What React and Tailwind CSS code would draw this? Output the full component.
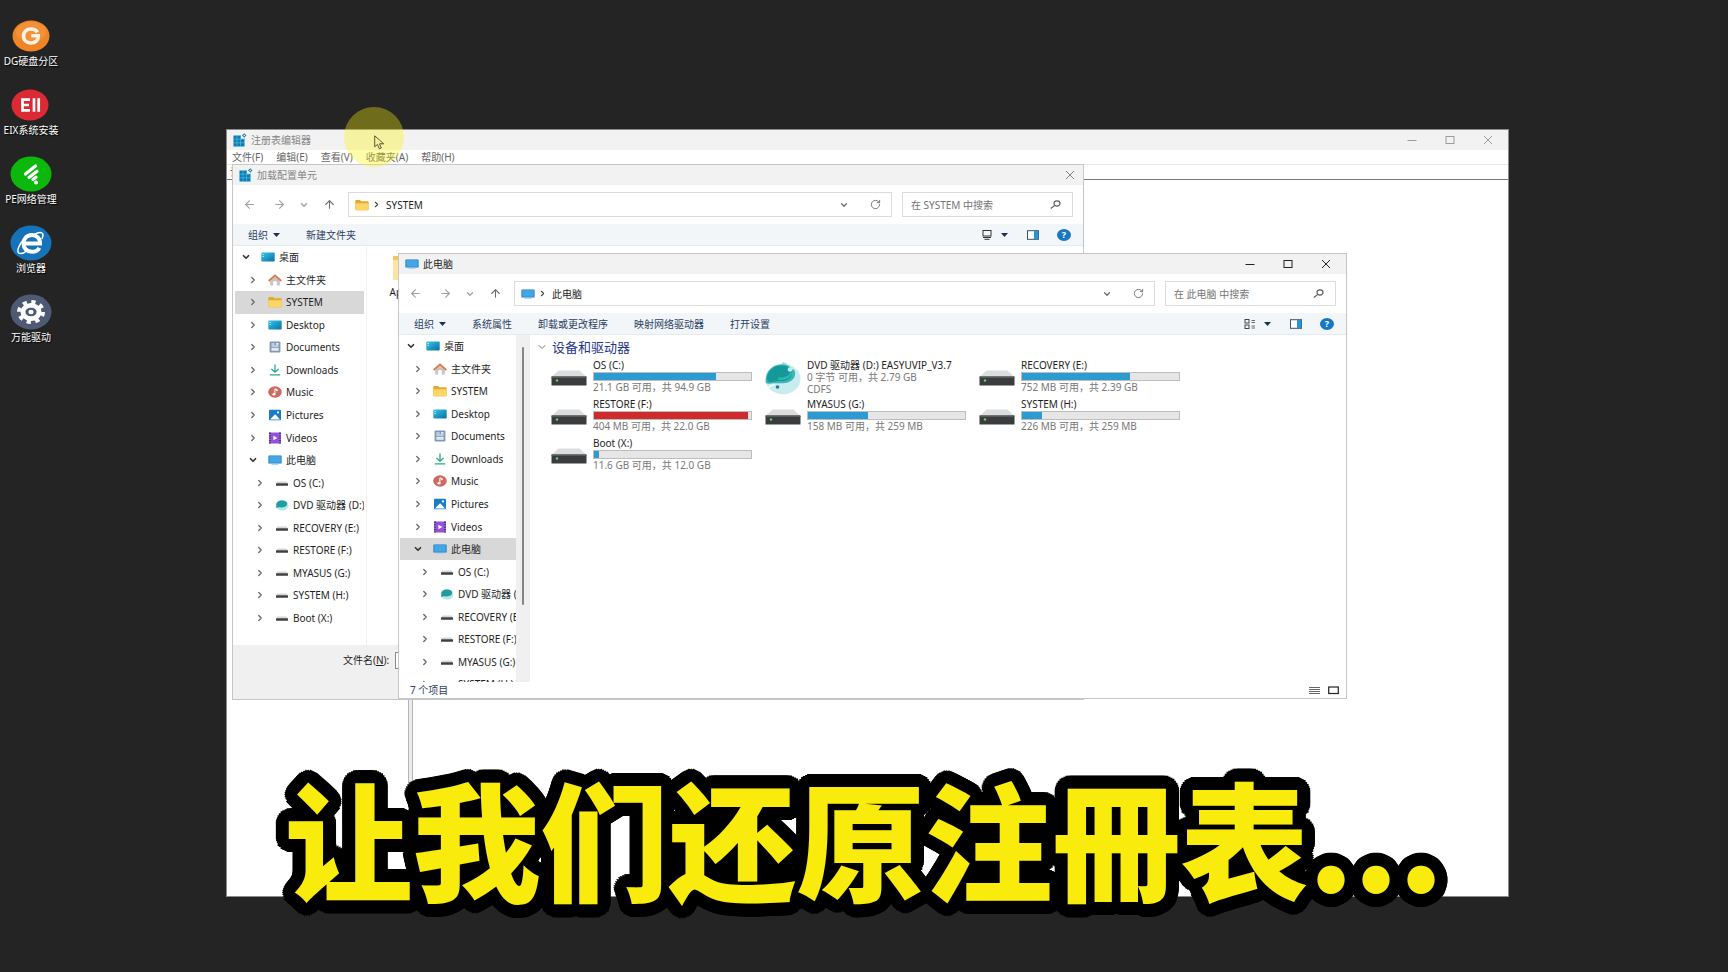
import { useState } from "react";
import { ArrowLeft, ArrowRight, ArrowUp, ChevronDown, ChevronRight, RotateCw } from "lucide-react";
import clsx from "clsx";

const TREE = [
  { label: "桌面", icon: "desktop", level: 0, open: true },
  { label: "主文件夹", icon: "home", level: 1 },
  { label: "SYSTEM", icon: "folder", level: 1 },
  { label: "Desktop", icon: "desktop", level: 1 },
  { label: "Documents", icon: "documents", level: 1 },
  { label: "Downloads", icon: "downloads", level: 1 },
  { label: "Music", icon: "music", level: 1 },
  { label: "Pictures", icon: "pictures", level: 1 },
  { label: "Videos", icon: "videos", level: 1 },
  { label: "此电脑", icon: "pc", level: 1, open: true },
  { label: "OS (C:)", icon: "drive", level: 2 },
  { label: "DVD 驱动器 (D:) EASYUVIP_V3.7", icon: "dvd", level: 2 },
  { label: "RECOVERY (E:)", icon: "drive", level: 2 },
  { label: "RESTORE (F:)", icon: "drive", level: 2 },
  { label: "MYASUS (G:)", icon: "drive", level: 2 },
  { label: "SYSTEM (H:)", icon: "drive", level: 2 },
  { label: "Boot (X:)", icon: "drive", level: 2 },
];

const DRIVES = [
  { name: "OS (C:)", info: "21.1 GB 可用，共 94.9 GB", used: 78 },
  { name: "DVD 驱动器 (D:) EASYUVIP_V3.7", info: "0 字节 可用，共 2.79 GB", fs: "CDFS" },
  { name: "RECOVERY (E:)", info: "752 MB 可用，共 2.39 GB", used: 69 },
  { name: "RESTORE (F:)", info: "404 MB 可用，共 22.0 GB", used: 98 },
  { name: "MYASUS (G:)", info: "158 MB 可用，共 259 MB", used: 38 },
  { name: "SYSTEM (H:)", info: "226 MB 可用，共 259 MB", used: 13 },
  { name: "Boot (X:)", info: "11.6 GB 可用，共 12.0 GB", used: 3 },
];

const INDENT = ["pl-[5px]", "pl-[12px]", "pl-[19px]"];

// Two rings of hard shadows make a thick outline with round corners
const OUTLINE = [7, 13]
  .flatMap((radius) =>
    Array.from({ length: 36 }, (_, i) => {
      const angle = (i * Math.PI) / 18;
      return `${(radius * Math.cos(angle)).toFixed(1)}px ${(radius * Math.sin(angle)).toFixed(1)}px 0 #000`;
    })
  )
  .join(", ");

function SmallIcon({ name }) {
  return (
    <svg viewBox="0 0 14 12" className="w-3.5 h-3 shrink-0" aria-hidden="true">
      {name === "desktop" && (
        <>
          <defs>
            <linearGradient id="desk" x1="0" y1="0" x2="1" y2="1">
              <stop offset="0" stopColor="#35c6ea" />
              <stop offset="1" stopColor="#0b6ea3" />
            </linearGradient>
          </defs>
          <rect x="0.3" y="1.6" width="13.4" height="9" rx="1" fill="url(#desk)" />
          <path d="M1.6 3.5h1.2M1.6 5.5h1.2" stroke="#d8f5ff" strokeWidth="0.9" />
        </>
      )}
      {name === "home" && (
        <>
          <path d="M2.2 6 7 2l4.8 4v5.4H8.6V7.6H5.4v3.8H2.2z" fill="#c9c5c3" />
          <path d="M5.4 7.6h3.2v3.8H5.4z" fill="#fff" />
          <path d="M0.7 7 7 1.4 13.3 7" fill="none" stroke="#d97b4a" strokeWidth="1.8" />
        </>
      )}
      {name === "folder" && (
        <>
          <path d="M0.3 2q0-1 1-1h3.6l1.4 1.2h6.4q1 0 1 1V10.5q0 .7-.8.7H1.1q-.8 0-.8-.7z" fill="#e3a92d" />
          <path d="M0.3 4.2h13.4v6.2q0 .8-.8.8H1.1q-.8 0-.8-.8z" fill="#fbd667" />
        </>
      )}
      {name === "documents" && (
        <>
          <rect x="1.6" y="0.6" width="10.8" height="11" rx="1" fill="#8299b5" />
          <path d="M3.4 3h3.2M3.4 5h7.2" stroke="#fff" strokeWidth="1.1" />
          <rect x="3.4" y="6.8" width="7.2" height="3" fill="#dfe9f4" />
          <rect x="8" y="2" width="2.6" height="1.8" fill="#dfe9f4" />
        </>
      )}
      {name === "downloads" && (
        <path d="M7 0.6v7.4M3.4 5 7 8.200 10.600 5M1.8 10.9h10.4" fill="none" stroke="#2aa986" strokeWidth="1.3" />
      )}
      {name === "music" && (
        <>
          <ellipse cx="7" cy="6" rx="6.8" ry="5.8" fill="#cf6a63" />
          <path d="M6.9 8.2V2.8l2.4.8v1.2l-1.5-.4" fill="none" stroke="#fff" strokeWidth="1" />
          <ellipse cx="5.9" cy="8.2" rx="1.5" ry="1.3" fill="#fff" />
        </>
      )}
      {name === "pictures" && (
        <>
          <rect x="1" y="0.8" width="12" height="10.4" rx="1" fill="#1a7cc8" />
          <path d="M2 10.6 6.800 5.600q.3-.3.7 0L12 10.6z" fill="#fff" />
          <circle cx="10" cy="3.4" r="1.1" fill="#fff" />
        </>
      )}
      {name === "videos" && (
        <>
          <rect x="1" y="0.6" width="12" height="11" rx="1" fill="#9351d6" />
          <path d="M1 0.6h2v11H1zM11 0.6h2v11h-2z" fill="#5b2aa0" />
          <path d="M2 2v8.5M12 2v8.5" stroke="#d9c2f5" strokeWidth="0.9" strokeDasharray="1.2 1.2" />
          <path d="M5.4 3.7 9.400 6l-4 2.3z" fill="#fff" />
        </>
      )}
      {name === "pc" && (
        <>
          <rect x="0.4" y="1.4" width="13.2" height="8.2" rx="0.6" fill="#1879b8" />
          <rect x="1.2" y="2.1" width="11.6" height="6.7" fill="#43a6e6" />
          <path d="M3.5 10.6h7" stroke="#a9d4ee" strokeWidth="1" />
        </>
      )}
      {name === "drive" && (
        <>
          <path d="M2.5 4.5h9l1.5 2H1z" fill="#d5d6d8" />
          <rect x="1" y="6.3" width="12" height="2.5" rx="0.4" fill="#3f4042" />
        </>
      )}
      {name === "dvd" && (
        <>
          <ellipse cx="7.2" cy="6.4" rx="6.2" ry="5.2" fill="#b5e6ea" />
          <path d="M1.2 6.8C1 3.500 3.500 1.600 7 1.600c4 0 6 2.200 4.800 4.600-1.200 2-4 2.300-6 2.200-2-.2-3.600.2-4 1q-.6-1-.6-2.600z" fill="#1f9da0" />
        </>
      )}
    </svg>
  );
}

function RegistryIcon() {
  return (
    <svg viewBox="0 0 14 14" className="w-3.5 h-3.5 shrink-0" aria-hidden="true">
      <rect x="0.5" y="2.5" width="11" height="11" fill="#0a7db5" />
      <path d="M4 2.500v11M7.500 2.500v11M.5 6.200h11M.5 9.800h11" stroke="#63c3e8" strokeWidth="0.6" />
      <rect x="8" y="2" width="3.6" height="3.800" fill="#f2f2f2" />
      <path d="m11.200 .2 2.300 2.200-2.300 2.200-2.300-2.200z" fill="#2b7fa6" />
      <circle cx="11.2" cy="2.4" r="0.7" fill="#fff" />
    </svg>
  );
}

function DriveIcon() {
  return (
    <svg viewBox="0 0 36 16" className="w-9 h-4" aria-hidden="true">
      <path d="M7.5 0.5h21L35.500 7H.5z" fill="#dcdddf" />
      <rect x="0.5" y="6.5" width="35" height="9" rx="0.6" fill="#3b3c3e" />
      <rect x="0.5" y="6.5" width="35" height="1.5" fill="#58595b" />
      <circle cx="6" cy="10.5" r="1.2" fill="#63d26a" />
    </svg>
  );
}

function DiscIcon() {
  return (
    <svg viewBox="0 0 36 34" className="w-9 h-[34px]" aria-hidden="true">
      <path d="M14 2.5q1.5 1.5 3 .5.3-2 1.3-2 .8 1.5 3.2.9-.4 2-2.5 2.6z" fill="#8fd0d3" />
      <ellipse cx="18" cy="18" rx="17.5" ry="15.2" fill="#c9ecef" />
      <path d="M.8 22C-.5 11 7 3.500 17 3.200c5 0 8 1.800 9.500 4.500l3 1.600c2 5-.5 9.500-5.500 11.700-4.500 2-9.500 1.200-13.500 1.200-4.500 0-7.500 1.200-9.700-.2z" fill="#3fb5b3" />
      <path d="M2 17C3 9 9 4.500 17 4.500c6 0 11 4 10 9-1 5-7 7-12 6.500-5-.5-8 1.500-10.500 1.200Q2 20.500 2 17z" fill="#14989a" />
      <path d="M13 17.500c6 1 12-1 13.500-6" fill="none" stroke="#2cb6b2" strokeWidth="2.500" />
      <circle cx="25" cy="8.500" r="2.3" fill="#bfeef0" />
      <circle cx="12.5" cy="26" r="1.8" fill="#23808d" />
      <path d="M3 27q3.500-4 7-3" fill="none" stroke="#fff" strokeWidth="1.2" />
    </svg>
  );
}

function Caret() {
  return (
    <svg viewBox="0 0 7 4" className="w-[7px] h-1" aria-hidden="true">
      <path d="M0 0h7L3.500 4z" fill="#1d2f55" />
    </svg>
  );
}

function CloseGlyph() {
  return (
    <svg viewBox="0 0 10 10" className="size-2.5">
      <path d="m1 1 8 8M9 1 1 9" stroke="currentColor" fill="none" />
    </svg>
  );
}

function CaptionButtons({ muted }) {
  return (
    <div className={clsx("flex self-stretch pr-px", muted ? "text-[#9b9b9b]" : "text-[#222222]")}>
      <button aria-label="最小化" className="w-[38px] grid place-items-center">
        <svg viewBox="0 0 10 10" className="size-2.5"><path d="M.5 5.500h9" stroke="currentColor" /></svg>
      </button>
      <button aria-label="最大化" className="w-[38px] grid place-items-center">
        <svg viewBox="0 0 10 10" className="size-2.5"><rect x="1" y="1.5" width="8" height="7" fill="none" stroke="currentColor" /></svg>
      </button>
      <button aria-label="关闭" className="w-[38px] grid place-items-center">
        <CloseGlyph />
      </button>
    </div>
  );
}

function NavRow({ icon, place, hint }) {
  const [query, setQuery] = useState("");

  return (
    <div className="flex items-center pl-px pr-2.5 h-[39px] text-[#6d6d6d]">
      <button aria-label="后退" className="w-[30px] grid place-items-center text-[#a0a0a0]"><ArrowLeft size={13} strokeWidth={2} /></button>
      <button aria-label="前进" className="w-[30px] grid place-items-center text-[#a0a0a0]"><ArrowRight size={13} strokeWidth={2} /></button>
      <button aria-label="最近位置" className="w-5 grid place-items-center text-[#a0a0a0]"><ChevronDown size={10} strokeWidth={3} /></button>
      <button aria-label="向上" className="w-[30px] grid place-items-center"><ArrowUp size={13} strokeWidth={2} /></button>

      {/* Address bar */}
      <div className="ml-1 flex-1 h-[25px] flex items-center border border-[#dcdcdc] pl-1.5 pr-2.5">
        <SmallIcon name={icon} />
        <ChevronRight size={9} strokeWidth={3} className="ml-[3px] text-[#444444]" />
        <button className="ml-[5px] text-[#1e1e1e]">{place}</button>
        <button aria-label="历史记录" className="ml-auto"><ChevronDown size={10} strokeWidth={3} /></button>
        <button aria-label="刷新" className="ml-[21px]"><RotateCw size={11} /></button>
      </div>

      <div className="ml-2.5 w-[171px] h-[25px] flex items-center border border-[#dcdcdc] pl-2 pr-[11px]">
        <input
          type="text"
          aria-label={hint}
          placeholder={hint}
          value={query}
          onChange={(e) => setQuery(e.target.value)}
          className="min-w-0 flex-1 outline-none placeholder:text-[#747474]"
        />
        <button aria-label="搜索">
          <svg viewBox="0 0 11 9" className="w-[11px] h-[9px]" fill="none" stroke="#5c5c5c" strokeWidth="1.2">
            <ellipse cx="7" cy="3.500" rx="3" ry="2.700" />
            <path d="M4.800 5.400.8 8.500" />
          </svg>
        </button>
      </div>
    </div>
  );
}

function Toolbar({ items, view }) {
  return (
    <div className="flex items-center h-[22px] bg-[#f3f6f9] border-b border-[#e8ebee] pl-[15px] pr-3 text-[#2a3f63]">
      <div className="flex items-center gap-[26px]">
        <button className="flex items-center gap-[5px]">组织 <Caret /></button>
        {items.map((item) => <button key={item}>{item}</button>)}
      </div>
      <div className="ml-auto flex items-center">
        <button aria-label="更改视图" className="flex items-center gap-2">
          {view === "tiles" ? (
            <svg viewBox="0 0 12 10" className="w-3 h-2.5" fill="none" stroke="#444444">
              <rect x="1" y="0.5" width="4" height="3.5" />
              <rect x="1" y="6" width="4" height="3.5" />
              <path d="M7.500 1.500H11M7.500 3.500H11M7.500 7H11M7.500 9H11" strokeWidth="0.8" />
            </svg>
          ) : (
            <svg viewBox="0 0 12 10" className="w-3 h-2.5" fill="none" stroke="#333333">
              <rect x="2" y="0.5" width="8" height="5.5" />
              <path d="M2 7.500h8M3.500 9.300h5" />
            </svg>
          )}
          <Caret />
        </button>
        <button aria-label="预览窗格" className="ml-[19px]">
          <svg viewBox="0 0 12 10" className="w-3 h-2.5">
            <rect x="0.5" y="0.7" width="11" height="8.6" fill="#fff" stroke="#35536b" />
            <rect x="7" y="1" width="4.5" height="8" fill="#2a93d5" />
          </svg>
        </button>
        <button aria-label="帮助" className="ml-[18px] w-3.5 h-3 rounded-[50%] bg-[#1879c2] text-white font-bold text-[9px] leading-3">?</button>
      </div>
    </div>
  );
}

function Tree({ selected }) {
  return (
    <ul className="flex flex-col h-[383px] shrink-0">
      {TREE.map((node) => (
        <li key={node.label} className="flex-1 flex">
          <button
            className={clsx(
              "flex-1 min-w-0 flex items-center overflow-hidden whitespace-nowrap rounded-[1px] text-[#1e1e1e]",
              INDENT[node.level],
              node.label === selected && "bg-[#d8d8d8]"
            )}
          >
            <span className="w-3 grid place-items-center shrink-0">
              {node.open
                ? <ChevronDown size={10} strokeWidth={4} className="text-[#333333]" />
                : <ChevronRight size={10} strokeWidth={3} className="text-[#666666]" />}
            </span>
            <span className="ml-[9px] mr-1 shrink-0"><SmallIcon name={node.icon} /></span>
            {node.label}
          </button>
        </li>
      ))}
    </ul>
  );
}

function Drive({ drive }) {
  return (
    <li className="flex gap-1.5">
      <div className={clsx("w-9 shrink-0", drive.fs ? "pt-0.5" : "pt-[11px]")}>
        {drive.fs ? <DiscIcon /> : <DriveIcon />}
      </div>
      <div className="w-[159px] leading-3 whitespace-nowrap">
        <p className="text-[#1e1e1e]">{drive.name}</p>
        {!drive.fs && (
          <div className="mt-px h-[9px] border border-[#bdbdbd] bg-[#e6e6e6]">
            <div
              className={clsx("h-full", drive.used > 90 ? "bg-[#cf2a2c]" : "bg-[#2c9bd2]")}
              style={{ width: `${drive.used}%` }}
            />
          </div>
        )}
        <p className="text-[#787878]">{drive.info}</p>
        {drive.fs && <p className="text-[#787878]">{drive.fs}</p>}
      </div>
    </li>
  );
}

function Shortcut({ label, children }) {
  return (
    <button className="flex flex-col items-center text-white">
      <svg viewBox="0 0 42 36" className="w-[42px] h-9">{children}</svg>
      <span className="leading-[14px] whitespace-nowrap [text-shadow:1px_1px_1px_#000]">{label}</span>
    </button>
  );
}

function Shortcuts() {
  return (
    <nav className="w-[62px] pt-[18px] flex flex-col gap-[19px]">
      <Shortcut label="DG硬盘分区">
        <ellipse cx="21" cy="18" rx="18.5" ry="15.5" fill="#ef8526" />
        <ellipse cx="21" cy="14" rx="15" ry="10" fill="#f59a45" opacity="0.6" />
        <path d="M27.5 14.2C26 11.800 23.500 11 20.800 11c-4.300 0-7.300 2.900-7.300 7s3 7 7.500 7c4.300 0 7.300-2.500 7.300-7.200h-7" fill="none" stroke="#fdf3e4" strokeWidth="3.6" />
      </Shortcut>
      <Shortcut label="EIX系统安装">
        <ellipse cx="20" cy="18" rx="18.5" ry="15.5" fill="#dc2a35" />
        <path d="M20 12.700h-7.500v10.600H20M12.500 18h6.500M24 11.200v13.600M28.700 11.200v13.600" fill="none" stroke="#fff" strokeWidth="2.700" />
      </Shortcut>
      <Shortcut label="PE网络管理">
        <ellipse cx="21" cy="18" rx="20.5" ry="17.5" fill="#0cb80c" />
        <path d="m15.500 18 10-8M19 21.500l8-6.300M23 23.500l3-2.300" stroke="#fff" strokeWidth="3.2" strokeLinecap="round" />
        <circle cx="26" cy="26.500" r="2" fill="#fff" />
      </Shortcut>
      <Shortcut label="浏览器">
        <ellipse cx="21" cy="18" rx="20.5" ry="17.5" fill="#1673ba" />
        <path d="M14 18.500h16c.3-5-3.400-8.500-8-8.500-5 0-8.500 3.700-8.500 8.500s3.500 8.300 8.500 8.300c3.400 0 6-1.500 7.300-4" fill="none" stroke="#fff" strokeWidth="4" />
        <path d="M14 14C9.500 19 6 26.500 9 28.200c2 1 5.500-.5 8-2.300M24 9.500c3.500-1.800 7.500-2.600 8.600-.8.800 1.500.2 3.500-.8 5.300" fill="none" stroke="#fff" strokeWidth="1.5" />
      </Shortcut>
      <Shortcut label="万能驱动">
        <ellipse cx="21" cy="18" rx="20.5" ry="17.5" fill="#4e5a73" />
        <ellipse cx="21" cy="18" rx="12" ry="10" fill="none" stroke="#fff" strokeWidth="4" strokeDasharray="4.200 4.460" />
        <ellipse cx="21" cy="18" rx="8" ry="6.700" fill="none" stroke="#fff" strokeWidth="4.800" />
        <ellipse cx="21" cy="18" rx="2.600" ry="2.200" fill="#fff" />
      </Shortcut>
    </nav>
  );
}

function RegistryWindow() {
  return (
    <section className="absolute left-[226px] right-[219px] top-[129px] bottom-[75px] flex flex-col bg-white border border-[#8b8b8b]">
      <header className="flex items-center h-5 pl-1.5 bg-[#f2f2f2] text-[#858585]">
        <RegistryIcon />
        <h1 className="ml-1">注册表编辑器</h1>
        <div className="ml-auto flex self-stretch"><CaptionButtons muted /></div>
      </header>
      <div className="flex items-center gap-[13px] h-[14px] pl-[5px] text-[#666666]">
        <button>文件(F)</button>
        <button>编辑(E)</button>
        <button>查看(V)</button>
        <button>收藏夹(A)</button>
        <button>帮助(H)</button>
      </div>
      <div className="h-4 border-t border-b border-t-[#e6e6e6] border-b-[#7b7b7b] pl-[3px] leading-[14px] text-[#333333]">计算机</div>
      <div className="flex-1 flex">
        <div className="w-[181px]" />
        <div className="w-[5px] border-x border-[#b4b4b4] bg-[#ececec]" />
      </div>
    </section>
  );
}

function LoadHiveDialog() {
  return (
    <section className="absolute left-[232px] top-[164px] w-[852px] h-[536px] flex flex-col bg-white border border-[#c6c6c6]">
      <header className="flex items-center h-5 pl-1.5 bg-[#f2f2f2] text-[#858585]">
        <RegistryIcon />
        <h2 className="ml-1">加载配置单元</h2>
        <button aria-label="关闭" className="ml-auto w-[26px] grid place-items-center"><CloseGlyph /></button>
      </header>
      <NavRow icon="folder" place="SYSTEM" hint="在 SYSTEM 中搜索" />
      <Toolbar items={["新建文件夹"]} view="icons" />
      <div className="flex-1 flex overflow-hidden">
        <div className="w-[134px] px-0.5 border-r border-[#f1f1f1]"><Tree selected="SYSTEM" /></div>
        <div className="flex flex-col items-center w-[86px] pt-[9px]">
          <svg viewBox="0 0 34 26" className="w-[34px] h-[26px]" aria-hidden="true">
            <path d="M0 2q0-1 1-1h10l3 3h19q1 0 1 1v20H0z" fill="#efc85c" />
            <path d="M0 5h34v20H0z" fill="#fbe5a2" />
          </svg>
          <span className="mt-1">AppData</span>
        </div>
      </div>
      <footer className="h-[54px] bg-[#f0f0f0] pl-[110px] pt-[7px] flex items-start gap-1.5">
        <label htmlFor="hive" className="leading-4">文件名(<u>N</u>):</label>
        <input id="hive" type="text" className="w-[500px] h-[17px] bg-white border border-[#8a8a8a] px-1 outline-none" />
      </footer>
    </section>
  );
}

function ExplorerWindow() {
  return (
    <section className="absolute left-[398px] top-[253px] w-[949px] h-[446px] flex flex-col bg-white border border-[#c6c6c6]">
      <header className="flex items-center h-5 pl-1.5 bg-[#f2f2f2] text-[#1e1e1e]">
        <SmallIcon name="pc" />
        <h2 className="ml-1">此电脑</h2>
        <div className="ml-auto flex self-stretch"><CaptionButtons /></div>
      </header>
      <NavRow icon="pc" place="此电脑" hint="在 此电脑 中搜索" />
      <Toolbar items={["系统属性", "卸载或更改程序", "映射网络驱动器", "打开设置"]} view="tiles" />

      <div className="flex-1 min-h-0 flex">
        <div className="w-[117px] pl-px overflow-hidden"><Tree selected="此电脑" /></div>
        <div className="w-3.5 bg-[#f0f0f0] flex justify-center pt-3">
          <div className="w-0.5 h-[258px] rounded-full bg-[#858585]" />
        </div>
        <div className="flex-1 pl-1.5">
          <button className="flex items-center gap-1 h-[24px] text-[13px] text-[#26348c]">
            <ChevronDown size={12} className="text-[#777777]" />
            设备和驱动器
          </button>
          <ul className="pl-[15px] grid grid-cols-[repeat(3,214px)] auto-rows-[39px]">
            {DRIVES.map((drive) => <Drive key={drive.name} drive={drive} />)}
          </ul>
        </div>
      </div>

      <footer className="h-4 flex items-center pl-[11px] pr-[7px] text-[#2a3f63]">
        <span>7 个项目</span>
        <button aria-label="详细信息" className="ml-auto">
          <svg viewBox="0 0 11 9" className="w-[11px] h-[9px]"><path d="M0 1.500h11M0 3.500h11M0 5.500h11M0 7.500h11" stroke="#555555" strokeWidth="0.9" /></svg>
        </button>
        <button aria-label="大图标" className="ml-2">
          <svg viewBox="0 0 11 9" className="w-[11px] h-[9px]"><rect x="0.7" y="1" width="9.6" height="6.5" fill="#fff" stroke="#222222" strokeWidth="1.2" /></svg>
        </button>
      </footer>
    </section>
  );
}

function App() {
  return (
    <main className="relative h-screen overflow-hidden bg-[#242424] text-[10px] leading-[14px] text-[#1e1e1e] font-['Noto_Sans','Noto_Sans_CJK_SC',sans-serif]">
      <Shortcuts />
      <RegistryWindow />
      <LoadHiveDialog />
      <ExplorerWindow />

      {/* Pointer with its highlight */}
      <div className="absolute left-[344px] top-[107px] size-[60px] rounded-full bg-[#fdf40d]/35 pointer-events-none">
        <svg viewBox="0 0 12 15" className="absolute left-[30px] top-[28px] w-3 h-[15px]" aria-hidden="true">
          <path d="M.7.8v11l2.800-2.400 1.800 4.400 2-.8-1.800-4.200h4.200z" fill="#f6f29c" stroke="#4a4a2c" strokeWidth="0.9" />
        </svg>
      </div>

      {/* Subtitle */}
      <p
        className="absolute inset-x-0 bottom-[45px] text-center whitespace-nowrap text-[128px] leading-[180px] font-black text-[#f9eb0c] font-['Noto_Sans_CJK_SC',sans-serif] pointer-events-none"
        style={{ textShadow: OUTLINE }}
      >
        让我们还原注冊表...
      </p>
    </main>
  );
}

export default App;
